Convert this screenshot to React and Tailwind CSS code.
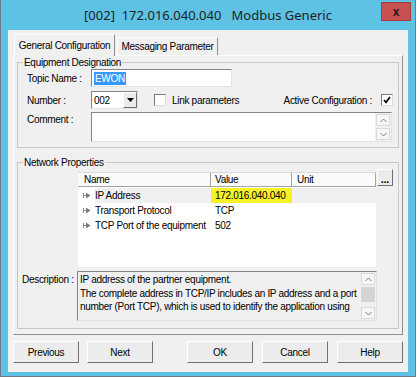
import { useState } from 'react'

const ui = "font-['Liberation_Sans',Arial,sans-serif] text-[10px] tracking-[-0.3px] leading-[13px] text-black whitespace-nowrap"
const sunken = 'border border-t-[#858585] border-l-[#858585] border-r-[#e3e3e3] border-b-[#e3e3e3] bg-white'
const raised = 'border border-t-white border-l-white border-r-[#6f6f6f] border-b-[#6f6f6f] bg-[#ececec]'

const rows = [
  { name: 'IP Address', value: '172.016.040.040', active: true },
  { name: 'Transport Protocol', value: 'TCP' },
  { name: 'TCP Port of the equipment', value: '502' },
]

function RowArrow() {
  return (
    <svg width="8" height="7" viewBox="0 0 8 7" className="shrink-0">
      <path d="M0.5 1v5M0.5 3.5h3" stroke="#8a8a8a" strokeWidth="1" />
      <path d="M3 0.5l4.5 3l-4.5 3z" fill="#7a7a7a" />
    </svg>
  )
}

function Chevron({ down }) {
  return (
    <svg width="7" height="5" viewBox="0 0 7 5">
      <path d={down ? 'M0.5 1l3 3l3-3' : 'M0.5 4l3-3l3 3'} fill="none" stroke="#7d7d7d" strokeWidth="1" />
    </svg>
  )
}

function ScrollBar({ thumb }) {
  return (
    <div className="flex h-full w-[16px] shrink-0 flex-col gap-[1px] bg-[#f0f0f0] p-[1px]">
      <div className="flex h-[12px] items-center justify-center border border-[#dadada] bg-[#f7f7f7]">
        <Chevron />
      </div>
      <div className="flex-1">
        {thumb ? <div className="mt-[1px] h-[15px] bg-[#d4d4d4]" /> : null}
      </div>
      <div className="flex h-[12px] items-center justify-center border border-[#dadada] bg-[#f7f7f7]">
        <Chevron down />
      </div>
    </div>
  )
}

function CheckBox({ checked }) {
  return (
    <div className="flex h-[12px] w-[12px] shrink-0 items-center justify-center border border-t-[#7a7a7a] border-l-[#7a7a7a] border-r-[#dcdcdc] border-b-[#dcdcdc] bg-white">
      {checked ? (
        <svg width="8" height="8" viewBox="0 0 8 8">
          <path d="M1 4l2 2.3L7 1" fill="none" stroke="#000" strokeWidth="1.7" />
        </svg>
      ) : null}
    </div>
  )
}

function PushButton({ label, className = '' }) {
  return (
    <button type="button" className={`${raised} h-[22px] w-[66px] shrink-0 ${className}`}>
      {label}
    </button>
  )
}

export default function App() {
  const [activeTab] = useState('general')

  return (
    <div className={`h-[377px] w-[418px] overflow-hidden bg-white ${ui}`}>
      <div className="flex h-[377px] w-[416px] flex-col border-x border-b border-[#6f7c84] bg-[#5ec2e5]">
        <div className="relative flex h-[30px] shrink-0 items-center justify-center">
          <span className="font-['Noto_Sans',sans-serif] text-[13px] tracking-normal leading-[18px] text-[#1e1e1e] whitespace-pre">
            [002]  172.016.040.040   Modbus Generic
          </span>
          <div className="absolute right-[4px] top-[2px] flex h-[19px] w-[30px] items-center justify-center border border-[#a33c3c] bg-[#c75050]">
            <span className="font-['Liberation_Sans',sans-serif] text-[12px] font-bold leading-none text-[#1a1a1a]">x</span>
          </div>
        </div>

        <div className="ml-[7px] flex h-[342px] w-[400px] flex-col bg-[#f0f0f0]">
          <div className="flex h-[25px] shrink-0 items-end">
            <div className={`relative z-10 -mb-px ml-[6px] flex h-[22px] w-[101px] items-start justify-center border border-b-0 border-t-white border-l-white border-r-[#8f8f8f] bg-[#f0f0f0] pt-[4px] ${activeTab === 'general' ? '' : ''}`}>
              General Configuration
            </div>
            <div className="ml-[2px] flex h-[18px] w-[101px] items-start justify-center border border-b-0 border-t-white border-l-white border-r-[#8f8f8f] pt-[2px]">
              Messaging Parameter
            </div>
          </div>

          <div className="ml-[5px] flex h-[280px] w-[390px] shrink-0 flex-col border border-t-white border-l-white border-r-[#8f8f8f] border-b-[#8f8f8f]">
            <fieldset className="ml-[3px] h-[92px] w-[382px] shrink-0 border border-[#c7c7c7]">
              <legend className="ml-[5px] px-[1px]">Equipment Designation</legend>
              <div className="flex flex-col pl-[9px]">
                <div className="flex h-[18px] items-center">
                  <span className="w-[64px]">Topic Name :</span>
                  <div className={`${sunken} flex h-[18px] w-[141px] items-center pl-[2px]`}>
                    <span className="bg-[#3399ff] px-[1px] text-white">EWON</span>
                  </div>
                </div>

                <div className="mt-[4px] flex h-[18px] items-center">
                  <span className="w-[64px]">Number :</span>
                  <div className={`${sunken} flex h-[18px] w-[47px] items-center`}>
                    <span className="flex-1 pl-[2px]">002</span>
                    <div className={`${raised} flex h-[16px] w-[14px] items-center justify-center`}>
                      <svg width="7" height="4" viewBox="0 0 7 4">
                        <path d="M0 0h7L3.5 4z" fill="#000" />
                      </svg>
                    </div>
                  </div>
                  <div className="ml-[16px]">
                    <CheckBox />
                  </div>
                  <span className="ml-[6px]">Link parameters</span>
                  <span className="ml-auto">Active Configuration :</span>
                  <div className="ml-[9px] mr-[5px]">
                    <CheckBox checked />
                  </div>
                </div>

                <div className="mt-[3px] flex items-start">
                  <span className="mt-[1px] w-[64px]">Comment :</span>
                  <div className={`${sunken} flex h-[30px] w-[301px] justify-end`}>
                    <ScrollBar />
                  </div>
                </div>
              </div>
            </fieldset>

            <fieldset className="ml-[3px] mt-[8px] h-[173px] w-[382px] shrink-0 border border-[#c7c7c7]">
              <legend className="ml-[5px] px-[1px]">Network Properties</legend>
              <div className="mt-[3px] flex items-start pl-[60px]">
                <div className="flex w-[298px] flex-col">
                  <div className="grid h-[15px] grid-cols-[133px_81px_84px] bg-[#fafafa]">
                    <div className="border border-l-0 border-t-[#d9d9d9] border-r-[#a5a5a5] border-b-[#a5a5a5] pl-[6px] leading-[13px]">Name</div>
                    <div className="border border-l-0 border-t-[#d9d9d9] border-r-[#a5a5a5] border-b-[#a5a5a5] pl-[4px] leading-[13px]">Value</div>
                    <div className="border border-l-0 border-t-[#d9d9d9] border-r-[#a5a5a5] border-b-[#a5a5a5] pl-[5px] leading-[13px]">Unit</div>
                  </div>
                  <div className="flex h-[80px] flex-col bg-white pt-[1px]">
                    {rows.map((row) => (
                      <div key={row.name} className="grid h-[15px] grid-cols-[133px_81px_84px]">
                        <div className="flex items-center">
                          <div className="flex w-[17px] justify-center pl-[1px]">
                            <RowArrow />
                          </div>
                          <span className={`flex h-full flex-1 items-center ${row.active ? 'bg-[#f0f0f0]' : ''}`}>{row.name}</span>
                        </div>
                        <div className={`flex items-center pl-[4px] ${row.active ? 'bg-[#f5f227]' : ''}`}>{row.value}</div>
                        <div className={row.active ? 'bg-[#f0f0f0]' : ''} />
                      </div>
                    ))}
                  </div>
                </div>
                <div className={`${raised} -mt-[3px] ml-[1px] flex h-[17px] w-[16px] items-end justify-center pb-[3px] text-[11px] font-bold leading-[6px]`}>
                  ...
                </div>
              </div>

              <div className="mt-[4px] flex items-start pl-[4px]">
                <span className="mt-[2px] w-[55px]">Description :</span>
                <div className="flex h-[50px] w-[300px] border border-t-[#858585] border-l-[#858585] border-r-[#e3e3e3] border-b-[#e3e3e3] bg-[#f0f0f0]">
                  <div className="flex-1 pl-[2px] pt-[1px] leading-[13.5px]">
                    <div>IP address of the partner equipment.</div>
                    <div>The complete address in TCP/IP includes an IP address and a port</div>
                    <div>number (Port TCP), which is used to identify the application using</div>
                  </div>
                  <ScrollBar thumb />
                </div>
              </div>
            </fieldset>
          </div>

          <div className="mt-[6px] flex items-center pl-[5px]">
            <PushButton label="Previous" />
            <PushButton label="Next" className="ml-[8px]" />
            <PushButton label="OK" className="ml-[34px]" />
            <PushButton label="Cancel" className="ml-[9px]" />
            <PushButton label="Help" className="ml-[9px]" />
          </div>
        </div>
      </div>
    </div>
  )
}
